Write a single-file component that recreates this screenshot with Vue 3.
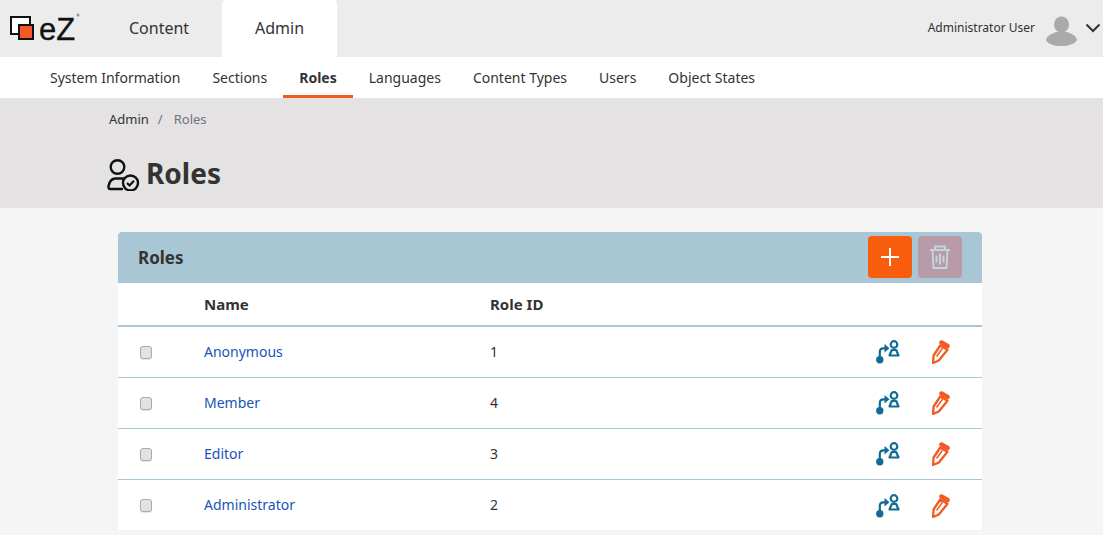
<script setup>
const subnav = ['System Information', 'Sections', 'Roles', 'Languages', 'Content Types', 'Users', 'Object States']
const roles = [
  { name: 'Anonymous', id: 1 },
  { name: 'Member', id: 4 },
  { name: 'Editor', id: 3 },
  { name: 'Administrator', id: 2 }
]
</script>

<template>
  <div class="page">
    <header class="top">
      <div class="logo">
        <svg width="80" height="30" viewBox="0 0 80 30">
          <rect x="11" y="4" width="19" height="17" fill="#fff" stroke="#111" stroke-width="2" />
          <rect x="19" y="12" width="14" height="14" fill="#f15a22" stroke="#111" stroke-width="2" />
          <text x="39" y="27" class="logo-text">eZ</text>
          <circle cx="78" cy="2" r="1.500" fill="#999" />
        </svg>
      </div>
      <nav class="tabs">
        <a class="tab">Content</a>
        <a class="tab active">Admin</a>
      </nav>
      <div class="user">
        <span class="user-name">Administrator User</span>
        <svg class="avatar" width="32" height="32" viewBox="0 0 32 32">
          <ellipse cx="16.500" cy="8.500" rx="7.500" ry="8" fill="#aaa" />
          <path d="M1 24c1-5 8-7 10-8h11c3 1 9 3 10 8-2 4-9 6-16 6S3 28 1 24z" fill="#aaa" />
        </svg>
        <svg class="chevron" width="16" height="10" viewBox="0 0 16 10">
          <path d="M1.500 1.500L8 8l6.500-6.500" fill="none" stroke="#333" stroke-width="2" />
        </svg>
      </div>
    </header>

    <nav class="subnav">
      <a v-for="item in subnav" :key="item" class="subitem" :class="{ current: item === 'Roles' }">{{ item }}</a>
    </nav>

    <section class="crumbs">
      <div class="breadcrumb">
        <span>Admin</span>
        <span class="sep">/</span>
        <span class="muted">Roles</span>
      </div>
      <div class="title">
        <svg width="36" height="36" viewBox="0 0 36 36" fill="none" stroke="#111" stroke-width="2.400">
          <circle cx="13.500" cy="12" r="6.800" />
          <path d="M20 23.500h-8.500c-4 0-6 3-7 7.500-.3 1.500 .3 3 1.800 3H18" stroke-linecap="round" />
          <circle cx="26.500" cy="28" r="7.500" />
          <path d="M23 28l2.500 2.500 4.500-4.800" stroke-width="2.200" />
        </svg>
        <h1>Roles</h1>
      </div>
    </section>

    <main class="content">
      <div class="panel">
        <div class="panel-head">
          <h2>Roles</h2>
          <div class="actions">
            <button class="btn add" aria-label="Add">
              <svg width="18" height="18" viewBox="0 0 18 18"><path d="M9 0v18M0 9h18" stroke="#fff" stroke-width="2" /></svg>
            </button>
            <button class="btn del" aria-label="Delete">
              <svg width="22" height="26" viewBox="0 0 22 26" fill="none" stroke="#c4d4dc" stroke-width="2" stroke-linejoin="round">
                <path d="M1 6h20M6 5.500V2.500h10v3M3.500 6l1 18h13l1-18" />
                <path d="M7.500 11.500v7M11 9.500v11M14.500 11.500v7" />
              </svg>
            </button>
          </div>
        </div>
        <div class="row head">
          <div class="c-check"></div>
          <div class="c-name">Name</div>
          <div class="c-id">Role ID</div>
        </div>
        <div v-for="role in roles" :key="role.id" class="row">
          <div class="c-check"><span class="checkbox"></span></div>
          <div class="c-name"><a class="link">{{ role.name }}</a></div>
          <div class="c-id">{{ role.id }}</div>
          <div class="c-icons">
            <svg width="24" height="24" viewBox="0 0 24 24" fill="none" stroke="#0f6d94" stroke-width="2.200">
              <circle cx="3.800" cy="19.800" r="3.700" fill="#0f6d94" stroke="none" />
              <path d="M3.800 17v-5c0-2.500 1.200-3.700 3.500-3.700H9" />
              <path d="M8.500 4l5 4.300-5 4.300z" fill="#0f6d94" stroke="none" />
              <circle cx="18" cy="4.500" r="3.300" />
              <path d="M15.800 10h4.400l2.300 5.500h-9z" stroke-linejoin="round" />
            </svg>
            <svg width="18" height="24" viewBox="0 0 18 24" fill="none" stroke="#f15a22" stroke-width="2.300">
              <path d="M1 23l.6-7.500L8.200 5.500l7.300 4.300-8.700 10.700z" stroke-linejoin="round" />
              <path d="M4.500 16.500L10.500 8.200" stroke-width="1.500" />
              <path d="M9.500 2.500l6 3.500" stroke-width="4.500" stroke-linecap="round" />
            </svg>
          </div>
        </div>
      </div>
    </main>
  </div>
</template>

<style>
html, body { margin: 0; background: #f5f5f5; }
</style>

<style scoped>
.page {
  height: 535px;
  overflow: hidden;
  font-family: "Noto Sans", "Open Sans", sans-serif;
  color: #333;
  font-size: 14px;
  background: #f5f5f5;
}
.top {
  height: 57px;
  background: #ececec;
  display: flex;
  align-items: stretch;
}
.logo { width: 100px; padding: 13px 0 0 0; box-sizing: border-box; }
.logo svg { display: block; overflow: visible; }
.logo-text { font-family: "Liberation Sans", sans-serif; font-size: 31px; fill: #111; stroke: #111; stroke-width: 0.3px; }
.tabs { display: flex; }
.tab {
  font-size: 16px;
  display: flex;
  align-items: center;
  padding: 0 29px 2px;
  height: 57px;
  box-sizing: border-box;
}
.tab.active {
  background: #fff;
  padding: 0 33px 2px;
  border-radius: 4px 4px 0 0;
}
.tabs .tab:first-child { width: 122px; }
.user {
  margin-left: auto;
  display: flex;
  align-items: center;
  padding-right: 2px;
}
.user-name { font-size: 12px; margin-right: 10px; position: relative; top: -1px; }
.avatar { margin-right: 8px; position: relative; top: 3px; }
.chevron { position: relative; top: -1px; }
.subnav {
  height: 41px;
  background: #fff;
  display: flex;
  padding-left: 34px;
}
.subitem {
  display: flex;
  align-items: center;
  padding: 3px 16px 0;
  height: 41px;
  box-sizing: border-box;
  border-bottom: 3px solid transparent;
  white-space: nowrap;
}
.subitem.current { font-weight: 700; border-bottom-color: #f15a22; }
.crumbs {
  height: 110px;
  background: #e4e2e3;
  padding: 11px 0 0 109px;
  box-sizing: border-box;
}
.breadcrumb { font-size: 13px; line-height: 20px; display: flex; }
.sep { margin: 0 11px 0 9px; color: #6c757d; }
.muted { color: #6c757d; }
.title { display: flex; align-items: center; margin: 22px 0 0 -5px; gap: 6px; }
.title h1 { margin: 0; font-size: 28px; line-height: 44px; font-weight: 700; color: #333; }
.content { padding: 24px 121px 0 118px; }
.panel { background: #fff; }
.panel-head {
  height: 51px;
  background: #a8c6d3;
  border-radius: 4px 4px 0 0;
  display: flex;
  align-items: center;
  justify-content: space-between;
  padding: 0 20px;
}
.panel-head h2 { margin: 0; font-size: 17px; font-weight: 700; color: #333; }
.actions { display: flex; gap: 6px; margin-top: -1px; }
.btn {
  width: 44px;
  height: 42px;
  border: 0;
  padding: 0;
  border-radius: 4px;
  display: flex;
  align-items: center;
  justify-content: center;
}
.add { background: #f85c0d; }
.del { background: #b89aa8; }
.row {
  height: 51px;
  box-sizing: border-box;
  display: flex;
  align-items: center;
  padding-bottom: 2px;
  border-bottom: 1px solid #a8c6d3;
}
.row.head { height: 44px; padding-bottom: 0; border-bottom-width: 2px; font-weight: 700; font-size: 15px; }
.row:last-child { height: 50px; padding-bottom: 1px; border-bottom: 0; }
.c-check { width: 86px; display: flex; padding-left: 22px; box-sizing: border-box; }
.c-name { width: 286px; }
.c-id { flex: 1; }
.checkbox {
  width: 12px;
  height: 13px;
  box-sizing: border-box;
  border: 1px solid #aaa;
  border-radius: 3px;
  background: #e2e2e2;
  box-shadow: 0 1px 1px rgba(0, 0, 0, 0.1);
  position: relative;
  top: 1px;
}
.link { color: #1754b8; }
.c-icons { display: flex; align-items: center; gap: 32px; padding-right: 32px; position: relative; top: 1px; }
</style>
